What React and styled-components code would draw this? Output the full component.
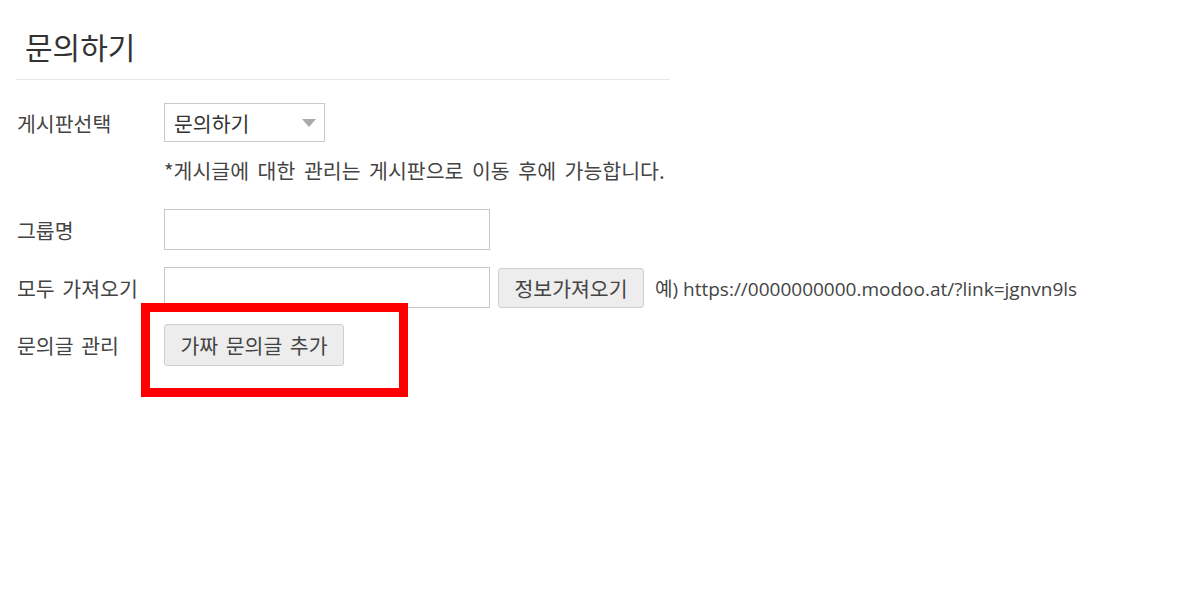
import React from "react";
import styled, { createGlobalStyle } from "styled-components";

const GlobalStyle = createGlobalStyle`
  body {
    margin: 0;
    background: #fff;
    font-family: "Noto Sans CJK KR", "Noto Sans", sans-serif;
    color: #444;
  }
`;

const App = () => {
  return (
    <>
      <GlobalStyle />
      <Page>
        <Title>문의하기</Title>
        <Form>
          <Row>
            <Label>게시판선택</Label>
            <Select>
              <span>문의하기</span>
              <Arrow />
            </Select>
          </Row>
          <Note>*게시글에 대한 관리는 게시판으로 이동 후에 가능합니다.</Note>
          <Row $gap={26}>
            <Label>그룹명</Label>
            <Input />
          </Row>
          <Row $gap={17}>
            <Label>모두 가져오기</Label>
            <Controls>
              <Input />
              <Button $width={146} $height={40} $offset={8}>
                정보가져오기
              </Button>
              <Example>예) https://0000000000.modoo.at/?link=jgnvn9ls</Example>
            </Controls>
          </Row>
          <Row $gap={16}>
            <Label>문의글 관리</Label>
            <Highlight>
              <Button $width={180} $height={42}>
                가짜 문의글 추가
              </Button>
              <Marker />
            </Highlight>
          </Row>
        </Form>
      </Page>
    </>
  );
};

export default App;

const Page = styled.div`
  width: 670px;
  min-height: 589px;
  box-sizing: border-box;
  padding: 24px 0 0 16px;
`;

const Title = styled.h2`
  margin: 0;
  padding: 0 0 11px 9px;
  font-size: 30px;
  line-height: 44px;
  font-weight: 400;
  color: #333;
  border-bottom: 1px solid #e6e6e6;
`;

const Form = styled.div`
  display: flex;
  flex-direction: column;
  padding-top: 23px;
`;

const Row = styled.div`
  display: grid;
  grid-template-columns: 148px auto;
  align-items: center;
  margin-top: ${(p) => p.$gap || 0}px;
`;

const Label = styled.div`
  padding-left: 1px;
  font-size: 20.5px;
  line-height: 26px;
  color: #444;
  white-space: nowrap;
  word-spacing: 3px;
`;

const Select = styled.div`
  width: 161px;
  height: 39px;
  box-sizing: border-box;
  border: 1px solid #c9c9c9;
  display: flex;
  align-items: center;
  justify-content: space-between;
  padding: 0 8px 0 9px;
  font-size: 20.5px;
  color: #333;
`;

const Arrow = styled.span`
  width: 0;
  height: 0;
  border-left: 7px solid transparent;
  border-right: 7px solid transparent;
  border-top: 8px solid #aaa;
`;

const Note = styled.div`
  margin: 15px 0 0 148px;
  font-size: 20.5px;
  line-height: 26px;
  color: #444;
  white-space: nowrap;
  word-spacing: 4px;
`;

const Controls = styled.div`
  display: flex;
  align-items: center;
`;

const Input = styled.div`
  width: 326px;
  height: 41px;
  box-sizing: border-box;
  border: 1px solid #c6c6c6;
  background: #fff;
`;

const Button = styled.div`
  width: ${(p) => p.$width}px;
  height: ${(p) => p.$height}px;
  box-sizing: border-box;
  margin-left: ${(p) => p.$offset || 0}px;
  border: 1px solid #cfcfcf;
  border-radius: 3px;
  background: #ededed;
  display: flex;
  align-items: center;
  justify-content: center;
  font-size: 20.5px;
  color: #444;
  white-space: nowrap;
  word-spacing: 3px;
`;

const Example = styled.span`
  margin-left: 11px;
  font-family: "Open Sans", "Noto Sans CJK KR", sans-serif;
  font-size: 19px;
  color: #444;
  white-space: nowrap;
`;

const Highlight = styled.div`
  position: relative;
  width: 180px;
`;

const Marker = styled.div`
  position: absolute;
  left: -23px;
  top: -21px;
  width: 267px;
  height: 94px;
  box-sizing: border-box;
  border: 9px solid #ff0000;
`;
